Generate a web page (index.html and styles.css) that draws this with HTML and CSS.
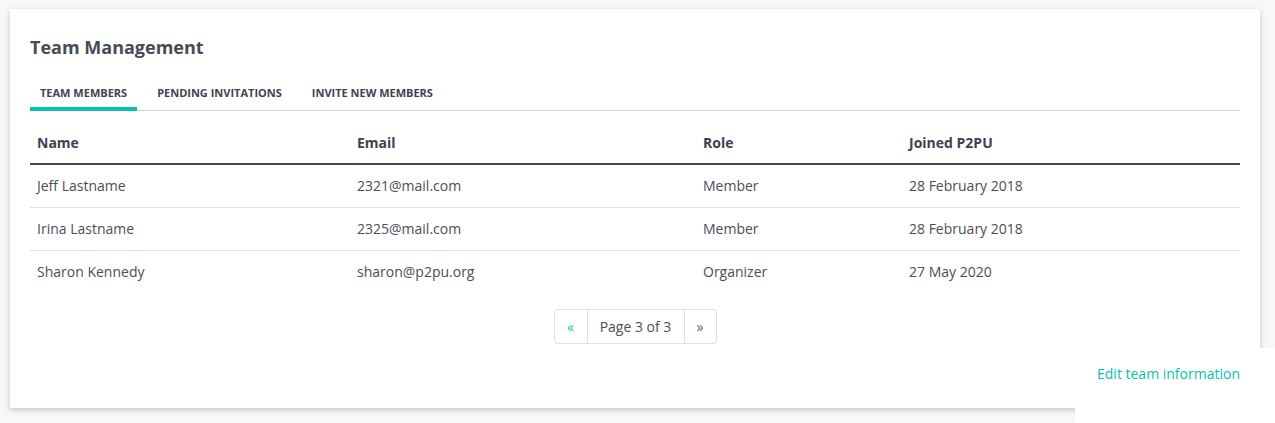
FILE: index.html
```html
<!DOCTYPE html>
<html lang="en">
<head>
<meta charset="utf-8">
<title>Team Management</title>
<link rel="stylesheet" href="styles.css">
</head>
<body>
<div class="card">
  <h2 class="title">Team Management</h2>
  <ul class="tabs">
    <li class="tab active">Team Members</li>
    <li class="tab">Pending Invitations</li>
    <li class="tab">Invite New Members</li>
  </ul>
  <table class="members">
    <colgroup>
      <col class="c-name"><col class="c-email"><col class="c-role"><col class="c-joined">
    </colgroup>
    <thead>
      <tr><th>Name</th><th>Email</th><th>Role</th><th>Joined P2PU</th></tr>
    </thead>
    <tbody>
      <tr><td>Jeff Lastname</td><td>2321@mail.com</td><td>Member</td><td>28 February 2018</td></tr>
      <tr><td>Irina Lastname</td><td>2325@mail.com</td><td>Member</td><td>28 February 2018</td></tr>
      <tr><td>Sharon Kennedy</td><td>sharon@p2pu.org</td><td>Organizer</td><td>27 May 2020</td></tr>
    </tbody>
  </table>
  <div class="pager-wrap">
    <div class="pager">
      <span class="pg pg-prev">&laquo;</span>
      <span class="pg pg-label">Page 3 of 3</span>
      <span class="pg pg-next">&raquo;</span>
    </div>
  </div>
</div>
<div class="edit-box">
  <a class="edit-link" href="#">Edit team information</a>
</div>
</body>
</html>
```
FILE: styles.css
```css
html, body {
  margin: 0;
  padding: 0;
}
body {
  background: #f8f8f8;
  font-family: "Open Sans", "Liberation Sans", sans-serif;
  color: #4a4e5a;
  padding: 9px 0 0 10px;
  width: 1275px;
  height: 423px;
  box-sizing: border-box;
  position: relative;
  overflow: hidden;
}
.card {
  width: 1250px;
  height: 399px;
  background: #fff;
  box-sizing: border-box;
  padding: 26px 20px 0 20px;
  box-shadow: 0 2px 6px rgba(0, 0, 0, 0.22);
}
.title {
  margin: 0;
  font-size: 18px;
  line-height: 24px;
  font-weight: 700;
  color: #474b57;
}
.tabs {
  list-style: none;
  margin: 26px 0 0 0;
  padding: 0;
  display: flex;
  gap: 10px;
  border-bottom: 1px solid #cfd3e3;
}
.tab {
  font-size: 11px;
  line-height: 16px;
  font-weight: 700;
  text-transform: uppercase;
  color: #3f4350;
  padding: 0 10px 6px 10px;
  border-bottom: 4px solid transparent;
  margin-bottom: -1px;
}
.tab.active {
  border-bottom-color: #05c2ad;
}
.members {
  width: 100%;
  border-collapse: collapse;
  table-layout: fixed;
  margin-top: 10px;
  font-size: 14px;
}
.c-name { width: 320px; }
.c-email { width: 346px; }
.c-role { width: 206px; }
.members th,
.members td {
  text-align: left;
  padding: 0 7px;
  height: 43px;
  box-sizing: border-box;
  vertical-align: middle;
}
.members th {
  font-weight: 700;
  color: #3d4150;
  border-bottom: 2px solid #444855;
}
.members td {
  color: #4a4e5a;
}
.members tbody tr + tr td {
  border-top: 1px solid #dfe2e7;
}
.pager-wrap {
  display: flex;
  justify-content: center;
  margin-top: 16px;
}
.pager {
  display: flex;
  border: 1px solid #dcdfe4;
  border-radius: 4px;
  height: 35px;
  box-sizing: border-box;
  font-size: 14px;
}
.pg {
  display: flex;
  align-items: center;
  justify-content: center;
}
.pg-prev {
  width: 32px;
  color: #05c2ad;
  border-right: 1px solid #dcdfe4;
}
.pg-label {
  width: 96px;
  color: #4a4e5a;
  border-right: 1px solid #dcdfe4;
}
.pg-next {
  width: 31px;
  color: #5a5e69;
}
.edit-box {
  position: absolute;
  left: 1075px;
  top: 348px;
  width: 200px;
  height: 75px;
  background: #fff;
  box-sizing: border-box;
  padding: 14px 35px 0 0;
  text-align: right;
}
.edit-link {
  font-size: 14px;
  line-height: 20px;
  color: #05c2ad;
  text-decoration: none;
}
```
